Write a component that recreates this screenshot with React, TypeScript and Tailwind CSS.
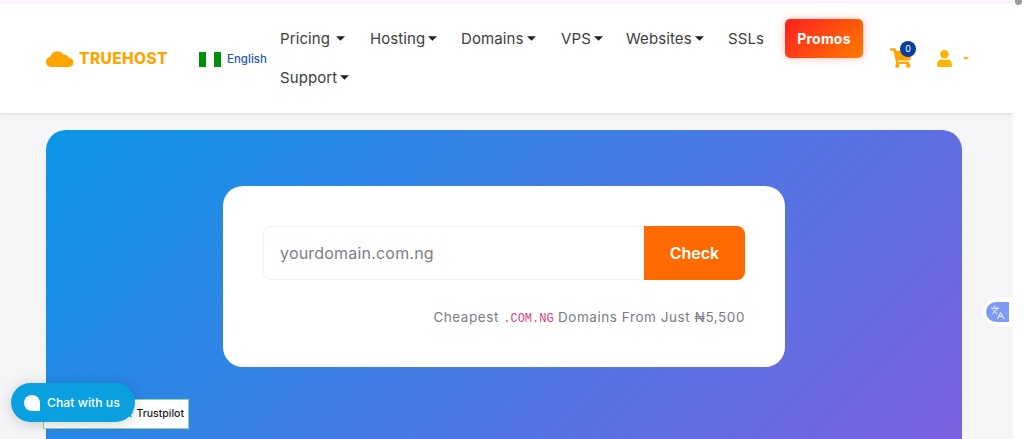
import { Languages } from "lucide-react";

const navItems = [
  { label: "Pricing", caret: true, gap: "ml-[6px]", width: "w-[90px]" },
  { label: "Hosting", caret: true, gap: "ml-[3px]", width: "w-[91px]" },
  { label: "Domains", caret: true, gap: "ml-[3px]", width: "w-[100px]" },
  { label: "VPS", caret: true, gap: "ml-[3px]", width: "w-[65px]" },
  { label: "Websites", caret: true, gap: "ml-[3px]", width: "w-[102px]" },
  { label: "SSLs", caret: false, gap: "", width: "w-[56px]" },
];

const Caret = ({ className = "" }: { className?: string }) => (
  <svg viewBox="0 0 10 5" className={`h-[5px] w-[9px] fill-[#1f1f1f] ${className}`}>
    <path d="M0 0h10L5 5z" />
  </svg>
);

const NavLink = ({ label, caret, gap }: { label: string; caret: boolean; gap: string }) => (
  <a className="flex items-center text-[15px] leading-[24px] tracking-[0.1px] text-[#3d3d3d]">
    {label}
    {caret && <Caret className={`${gap} mt-[-1px]`} />}
  </a>
);

export default function App() {
  return (
    <div className="relative flex h-[439px] w-[1024px] overflow-hidden bg-[#f5f5f8] font-['Inter','Liberation_Sans',sans-serif]">
      <div className="flex min-w-0 flex-1 flex-col">
        <div className="h-[3px] shrink-0 bg-[#fdf4fd]" />

        <header className="flex h-[110px] shrink-0 items-start bg-white pl-[46px] shadow-[0_1px_3px_rgba(0,0,0,0.12)]">
          {/* logo */}
          <div className="mt-[47px] flex w-[153px] items-center">
            <svg viewBox="0 0 26 17" preserveAspectRatio="none" className="h-[17px] w-[28px] fill-[#ffa500]">
              <path d="M5 17a5 5 0 0 1-1-9.9A6.5 6.5 0 0 1 16 4.5a5 5 0 0 1 5 3A4.8 4.8 0 0 1 21.5 17z" />
            </svg>
            <span className="ml-[5px] text-[15.5px] leading-[17px] font-extrabold tracking-[0.4px] text-[#ffa500]">
              TRUEHOST
            </span>
          </div>

          {/* language */}
          <div className="mt-[48px] flex w-[81px] items-center">
            <div className="flex h-[15px] w-[22px]">
              <div className="w-[7px] bg-[#008f0a]" />
              <div className="w-[8px] bg-white" />
              <div className="w-[7px] bg-[#008f0a]" />
            </div>
            <span className="ml-[6px] text-[11.5px] leading-[16px] font-medium text-[#2c55ad]">English</span>
          </div>

          {/* nav */}
          <nav className="mt-[16px] flex w-[505px] flex-wrap">
            {navItems.map((item) => (
              <div key={item.label} className={`flex h-[39px] items-center ${item.width}`}>
                <NavLink label={item.label} caret={item.caret} gap={item.gap} />
              </div>
            ))}
            <div className="flex h-[39px] items-center">
              <NavLink label="Support" caret gap="ml-[3px]" />
            </div>
          </nav>

          <a className="mt-[16px] flex h-[39px] w-[78px] items-center justify-center rounded-[5px] bg-[linear-gradient(135deg,#ff1f1f,#ff7a00)] text-[14px] font-bold tracking-[0.2px] text-white shadow-[0_0_8px_rgba(255,60,20,0.35)]">
            Promos
          </a>

          {/* cart */}
          <div className="relative ml-[27px] mt-[45px] h-[20px] w-[22px]">
            <svg viewBox="0 0 576 512" className="h-[20px] w-[22px] fill-[#ffa500]">
              <path d="M528 301l47-208c3-15-8-29-23-29H159l-9-47C148 7 139 0 128 0H24C11 0 0 11 0 24v16c0 13 11 24 24 24h70l70 343c-17 10-28 28-28 49 0 31 25 56 56 56s56-25 56-56c0-16-6-30-17-40h210c-11 10-17 24-17 40 0 31 25 56 56 56s56-25 56-56c0-22-13-41-32-51l5-24c3-15-8-29-23-29H212l-7-32h299c11 0 21-8 24-19z" />
            </svg>
            <span className="absolute left-[10px] top-[-7px] flex h-[16px] w-[16px] items-center justify-center rounded-full bg-[#0a3f9c] text-[9px] text-white">
              0
            </span>
          </div>

          {/* account */}
          <svg viewBox="0 0 448 512" className="ml-[25px] mt-[47px] h-[17px] w-[15px] fill-[#ffb300]">
            <path d="M224 256a128 128 0 1 0 0-256 128 128 0 0 0 0 256zm90 32h-17a174 174 0 0 1-146 0h-17C60 288 0 348 0 422v42c0 27 22 48 48 48h352c26 0 48-21 48-48v-42c0-74-60-134-134-134z" />
          </svg>
          <svg viewBox="0 0 10 5" className="ml-[11px] mt-[54px] h-[3px] w-[6px] fill-[#ffb300]">
            <path d="M0 0h10L5 5z" />
          </svg>
        </header>

        {/* hero */}
        <main className="flex-1 pl-[46px] pr-[51px] pt-[17px]">
          <section className="h-[340px] rounded-t-[20px] bg-[linear-gradient(135deg,#0b96e8,#7f60df)] pt-[56px]">
            <div className="ml-[177px] h-[181px] w-[562px] rounded-[20px] bg-white px-[40px] pt-[40px]">
              <div className="flex h-[54px] w-[482px] rounded-[8px] border border-[#f1f1f3]">
                <div className="flex flex-1 items-center pl-[16px] text-[16px] tracking-[0.2px] text-[#7d7d85]">
                  yourdomain.com.ng
                </div>
                <button className="my-[-1px] mr-[-1px] h-[54px] w-[101px] rounded-r-[8px] bg-[#ff6a00] text-[16px] font-semibold text-white">
                  Check
                </button>
              </div>
              <p className="mt-[28px] w-[482px] text-right text-[13.5px] leading-[18px] tracking-[0.55px] text-[#7b7b83]">
                Cheapest{" "}
                <span className="font-['Liberation_Mono',monospace] text-[12px] tracking-normal text-[#dc3f8c]">.COM.NG</span>{" "}
                Domains From Just ₦5,500
              </p>
            </div>
          </section>
        </main>
      </div>

      {/* scrollbar */}
      <div className="w-[11px] bg-white">
        <div className="mx-auto h-[5px] w-[7px] rounded-b-full bg-[#9a9a9a]" />
      </div>

      {/* trustpilot badge */}
      <div className="absolute left-[43px] top-[399px] flex h-[30px] w-[146px] items-center justify-end border border-[#8fd0a8] bg-white pr-[4px] text-[10.5px] font-medium text-[#1c1c1c]">
        <span className="mr-[2px] text-[11px] text-[#00b67a]">★</span>
        Trustpilot
      </div>

      {/* chat bubble */}
      <div className="absolute left-[11px] top-[383px] flex h-[39px] w-[124px] items-center rounded-full bg-[#0a9fdf] pl-[13px] shadow-[0_2px_14px_rgba(0,0,0,0.18)]">
        <span className="h-[16px] w-[16px] rounded-full rounded-br-none bg-white" />
        <span className="ml-[7px] mt-[2px] text-[12.25px] font-medium text-white">Chat with us</span>
      </div>

      {/* translate widget */}
      <div className="absolute right-[11px] top-[297px] flex h-[30px] w-[30px] items-center justify-end rounded-l-full bg-white pr-[4px]">
        <div className="flex h-[20px] w-[23px] items-center justify-center rounded-l-full rounded-r-[3px] bg-[#7c9bf5]">
          <Languages className="h-[15px] w-[15px] text-white" strokeWidth={1.5} />
        </div>
      </div>
    </div>
  );
}
